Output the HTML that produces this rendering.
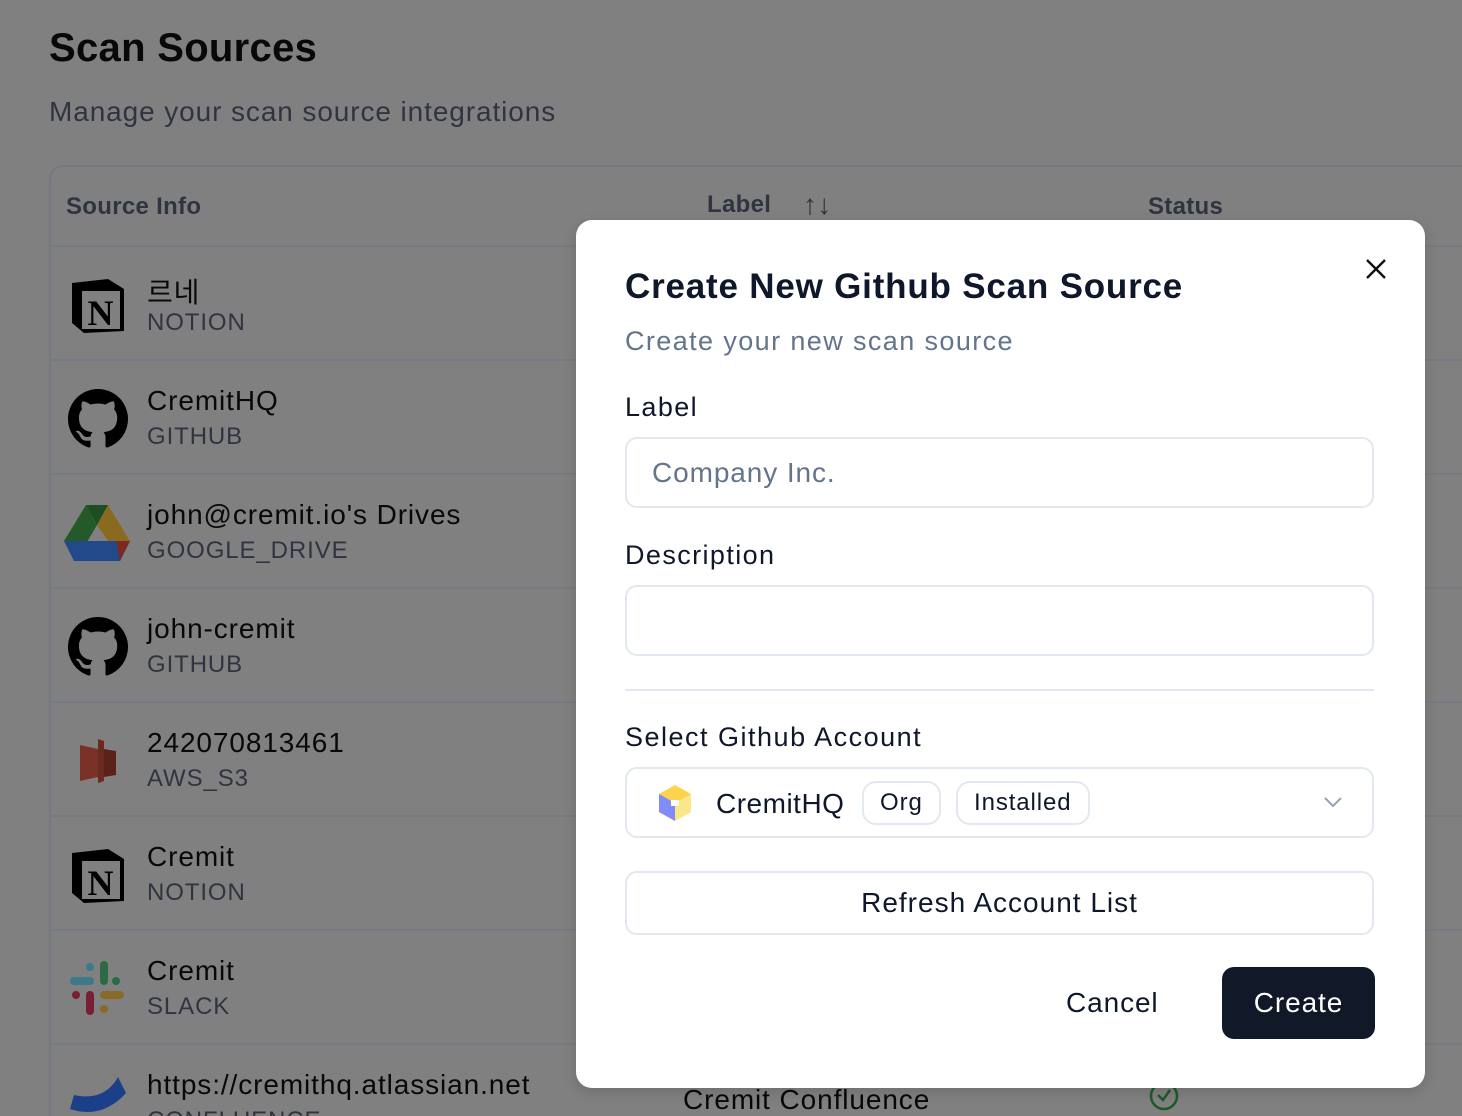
<!DOCTYPE html>
<html style="width:1462px;height:1116px;overflow:hidden"><head><meta charset="utf-8"><style>
*{box-sizing:border-box;margin:0;padding:0}
body{width:1462px;height:1116px;overflow:hidden;background:#808080;font-family:"Liberation Sans","Noto Sans CJK KR",sans-serif;position:relative;letter-spacing:0.9px}
.h1{position:absolute;left:49px;top:26px;font-size:40px;font-weight:bold;color:#080808;letter-spacing:0.3px}
.sub{position:absolute;left:49px;top:96px;font-size:28px;color:#2f3440}
.card{position:absolute;left:49px;top:165px;width:1460px;height:1000px;border:2px solid #747880;border-radius:14px}
.th{position:absolute;top:193px;font-size:24px;font-weight:bold;color:#2f3440;letter-spacing:0.3px}
.row{position:absolute;left:50px;width:1412px;height:114px;border-top:2px solid #767a82}
.row .ic{position:absolute;left:18px;top:28px;width:60px;height:60px}
.row .n{position:absolute;left:97px;top:24px;font-size:28px;color:#080808}
.row .t{position:absolute;left:97px;top:62px;font-size:24px;color:#2f3440}
.modal{position:absolute;left:576px;top:220px;width:849px;height:868px;background:#fff;border-radius:16px;box-shadow:0 4px 14px rgba(0,0,0,.15)}
.m{position:absolute}
.inp{position:absolute;left:49px;width:749px;height:71px;border:2px solid #e2e8f0;border-radius:12px}
.pill{display:inline-block;border:2px solid #e2e8f0;border-radius:14px;padding:6px 16px;font-size:24px;color:#0f172a;vertical-align:middle}
</style></head><body>
<div class="h1">Scan Sources</div>
<div class="sub">Manage your scan source integrations</div>
<div class="card"></div>
<div class="th" style="left:66px">Source Info</div>
<div class="th" style="left:707px;top:191px">Label</div>
<div class="th" style="left:803px;top:189px;font-size:28px;font-weight:normal">↑↓</div>
<div class="th" style="left:1148px">Status</div>

<div class="row" style="top:245px"><svg class="ic" viewBox="0 0 60 60"><path d="M4 8 L40 4 L56 14 L56 56 L16 58 L4 48Z" fill="#000"/><rect x="14" y="16" width="38" height="38" fill="#808080"/><text x="33" y="50" font-family="Liberation Serif" font-weight="bold" font-size="36" text-anchor="middle" fill="#000">N</text></svg><div class="n">르네</div><div class="t">NOTION</div></div>
<div class="row" style="top:359px"><svg class="ic" viewBox="0 0 16 16"><path fill="#000" d="M8 0C3.58 0 0 3.58 0 8c0 3.54 2.290 6.53 5.47 7.59.4.07.55-.17.55-.38 0-.19-.01-.82-.01-1.49-2.01.37-2.53-.49-2.69-.94-.09-.23-.48-.94-.82-1.13-.28-.15-.68-.52-.01-.53.63-.01 1.08.58 1.23.82.72 1.21 1.87.87 2.33.66.07-.52.28-.87.51-1.07-1.78-.2-3.64-.89-3.64-3.95 0-.87.31-1.59.82-2.15-.08-.2-.36-1.02.08-2.12 0 0 .67-.21 2.2.82.64-.18 1.32-.27 2-.27.68 0 1.36.09 2 .27 1.53-1.04 2.2-.82 2.2-.82.44 1.1.16 1.92.08 2.12.51.56.82 1.27.82 2.15 0 3.07-1.87 3.75-3.65 3.95.29.25.54.73.54 1.48 0 1.07-.01 1.93-.01 2.2 0 .21.15.46.55.38A8.013 8.013 0 0016 8c0-4.42-3.58-8-8-8z"/></svg><div class="n">CremitHQ</div><div class="t">GITHUB</div></div>
<div class="row" style="top:473px"><svg class="ic" style="left:14px;width:66px" viewBox="0 0 66 60"><path d="M22 2 L44 2 L33 22Z" fill="#1f4d23"/><path d="M22 2 L33 22 L12 58 L0 38Z" fill="#245a2a"/><path d="M44 2 L66 38 L44 38 L33 22Z" fill="#8a6a1e"/><path d="M0 38 L66 38 L56 58 L10 58Z" fill="#22498a"/><path d="M52 38 L66 38 L56 58Z" fill="#7a2a20"/></svg><div class="n">john@cremit.io's Drives</div><div class="t">GOOGLE_DRIVE</div></div>
<div class="row" style="top:587px"><svg class="ic" viewBox="0 0 16 16"><path fill="#000" d="M8 0C3.58 0 0 3.58 0 8c0 3.54 2.29 6.53 5.47 7.59.4.07.55-.17.55-.38 0-.19-.01-.82-.01-1.49-2.01.37-2.53-.49-2.69-.94-.09-.23-.48-.94-.82-1.13-.28-.15-.68-.52-.01-.53.63-.01 1.08.58 1.23.82.72 1.21 1.87.87 2.33.66.07-.52.28-.87.51-1.07-1.78-.2-3.64-.89-3.64-3.95 0-.87.31-1.59.82-2.15-.08-.2-.36-1.02.08-2.12 0 0 .67-.21 2.2.82.64-.18 1.32-.27 2-.27.68 0 1.36.09 2 .27 1.53-1.04 2.2-.82 2.2-.82.44 1.1.16 1.92.08 2.12.51.56.82 1.27.82 2.15 0 3.07-1.87 3.75-3.65 3.95.29.25.54.73.54 1.48 0 1.07-.01 1.93-.01 2.2 0 .21.15.46.55.38A8.013 8.013 0 0016 8c0-4.42-3.58-8-8-8z"/></svg><div class="n">john-cremit</div><div class="t">GITHUB</div></div>
<div class="row" style="top:701px"><svg class="ic" viewBox="0 0 60 60"><path d="M12 14 L30 18 L30 46 L12 50Z" fill="#7a3226"/><path d="M30 8 L36 10 L36 50 L30 52Z" fill="#6a2a20"/><path d="M36 18 L48 20 L48 44 L36 46Z" fill="#5a2218"/></svg><div class="n">242070813461</div><div class="t">AWS_S3</div></div>
<div class="row" style="top:815px"><svg class="ic" viewBox="0 0 60 60"><path d="M4 8 L40 4 L56 14 L56 56 L16 58 L4 48Z" fill="#000"/><rect x="14" y="16" width="38" height="38" fill="#808080"/><text x="33" y="50" font-family="Liberation Serif" font-weight="bold" font-size="36" text-anchor="middle" fill="#000">N</text></svg><div class="n">Cremit</div><div class="t">NOTION</div></div>
<div class="row" style="top:929px"><svg class="ic" viewBox="0 0 60 60"><rect x="2" y="18" width="24" height="8" rx="4" fill="#3a7a8a"/><rect x="18" y="4" width="8" height="8" rx="4" fill="#3a7a8a"/><rect x="32" y="2" width="8" height="24" rx="4" fill="#2a6a44"/><rect x="44" y="18" width="8" height="8" rx="4" fill="#2a6a44"/><rect x="32" y="32" width="24" height="8" rx="4" fill="#8a6a28"/><rect x="32" y="46" width="8" height="8" rx="4" fill="#8a6a28"/><rect x="18" y="32" width="8" height="24" rx="4" fill="#7a1e34"/><rect x="4" y="32" width="8" height="8" rx="4" fill="#7a1e34"/></svg><div class="n">Cremit</div><div class="t">SLACK</div></div>
<div class="row" style="top:1043px"><svg class="ic" viewBox="0 0 60 60"><path d="M2 36 C20 42 40 40 58 20 L50 4 C40 22 24 26 6 22Z" fill="#1c3f8a"/><path d="M4 60 C10 50 40 48 56 58 L56 70 L4 70Z" fill="#1c3f8a"/></svg><div class="n">https://cremithq.atlassian.net</div><div class="t">CONFLUENCE</div></div>
<div style="position:absolute;left:683px;top:1084px;font-size:28px;color:#080808">Cremit Confluence</div>
<svg style="position:absolute;left:1148px;top:1080px" width="32" height="32" viewBox="0 0 32 32"><circle cx="16" cy="16" r="13" fill="none" stroke="#1e5a28" stroke-width="2.5"/><path d="M10 15 L15 20 L22 10" fill="none" stroke="#1e5a28" stroke-width="2.5"/></svg>

<div class="modal">
<svg class="m" style="left:789px;top:38px" width="22" height="22" viewBox="0 0 22 22"><path d="M2 2L20 20M20 2L2 20" stroke="#111" stroke-width="2.4"/></svg>
<div class="m" style="left:49px;top:47px;font-size:35px;font-weight:bold;color:#0f172a;letter-spacing:0.8px">Create New Github Scan Source</div>
<div class="m" style="left:49px;top:106px;font-size:27px;color:#64748b;letter-spacing:1.4px">Create your new scan source</div>
<div class="m" style="left:49px;top:172px;font-size:27px;color:#0f172a;letter-spacing:1.4px">Label</div>
<div class="inp" style="top:217px"><span style="position:absolute;left:25px;top:18px;font-size:28px;color:#64748b">Company Inc.</span></div>
<div class="m" style="left:49px;top:320px;font-size:27px;color:#0f172a;letter-spacing:1.4px">Description</div>
<div class="inp" style="top:365px"></div>
<div class="m" style="left:49px;top:469px;width:749px;border-top:2px solid #e2e8f0"></div>
<div class="m" style="left:49px;top:502px;font-size:27px;color:#0f172a;letter-spacing:1.5px">Select Github Account</div>
<div class="inp" style="top:547px">
<svg style="position:absolute;left:30px;top:15px" width="36" height="38" viewBox="0 0 36 38"><path d="M18 1 L34 10 L34 28 L18 37 L2 28 L2 10Z" fill="#fcd34d"/><path d="M2 10 L18 19 L18 37 L2 28Z" fill="#818cf8"/><path d="M18 19 L34 10 L34 28 L18 37Z" fill="#fde68a"/><rect x="14" y="16" width="8" height="6" fill="#fff"/></svg>
<span style="position:absolute;left:89px;top:19px;font-size:28px;color:#0f172a;letter-spacing:0.5px">CremitHQ</span>
<span class="pill" style="position:absolute;left:235px;top:12px">Org</span>
<span class="pill" style="position:absolute;left:329px;top:12px">Installed</span>
<svg style="position:absolute;left:696px;top:27px" width="20" height="12" viewBox="0 0 20 12"><path d="M2 2L10 10L18 2" fill="none" stroke="#94a3b8" stroke-width="2"/></svg>
</div>
<div class="inp" style="top:651px;height:64px;text-align:center;font-size:28px;color:#0f172a;line-height:60px;letter-spacing:1px">Refresh Account List</div>
<div class="m" style="left:490px;top:767px;font-size:28px;color:#0f172a">Cancel</div>
<div class="m" style="left:646px;top:747px;width:153px;height:72px;background:#111827;border-radius:12px;color:#fff;font-size:28px;text-align:center;line-height:72px">Create</div>
</div>
</body></html>
